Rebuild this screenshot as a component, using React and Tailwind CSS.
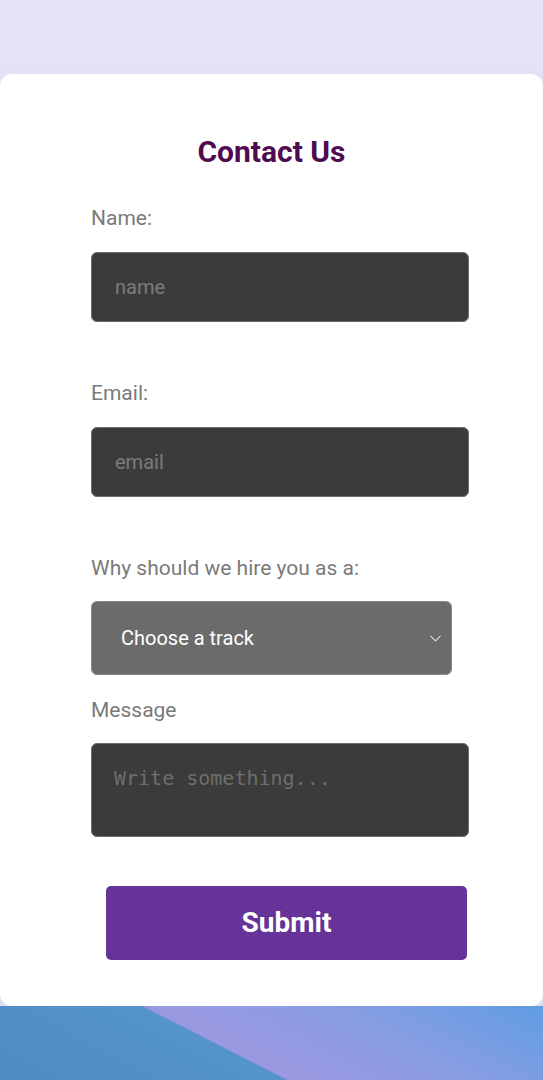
import { ChevronDown } from 'lucide-react';

const font = { fontFamily: 'Roboto, "Noto Sans", sans-serif' };

function Label({ children, className = '' }) {
  return <p className={`text-[21px] leading-[24px] text-[#7a7a7a] ${className}`}>{children}</p>;
}

export default function App() {
  return (
    <div className="min-h-screen w-[543px] bg-gradient-to-b from-[#e4e3f6] to-[#dfdcf2]" style={font}>
      <div className="h-[74px]" />
      <main className="rounded-[12px] bg-white px-[91px] pb-[46px] pt-[60px]">
        <h1 className="text-center text-[30px] font-bold leading-[36px] text-[#500b50]">Contact Us</h1>

        <Label className="mt-[36px]">Name:</Label>
        <input
          placeholder="name"
          className="mt-[22px] block h-[70px] w-[378px] rounded-[6px] border border-[#6c6c6c] bg-[#3b3b3b] px-[23px] text-[20px] text-white outline-none placeholder:text-[#7b7b7b]"
        />

        <Label className="mt-[59px]">Email:</Label>
        <input
          placeholder="email"
          className="mt-[22px] block h-[70px] w-[378px] rounded-[6px] border border-[#6c6c6c] bg-[#3b3b3b] px-[23px] text-[20px] text-white outline-none placeholder:text-[#7b7b7b]"
        />

        <Label className="mt-[59px]">Why should we hire you as a:</Label>
        <div className="mt-[21px] flex h-[74px] w-[361px] items-center justify-between rounded-[6px] border border-[#8a8a8a] bg-[#6b6b6b] pl-[29px] pr-[6px]">
          <span className="text-[20px] text-white">Choose a track</span>
          <ChevronDown size={19} strokeWidth={1.3} className="text-[#e0e0e0]" />
        </div>

        <Label className="mt-[23px]">Message</Label>
        <textarea
          placeholder="Write something..."
          className="mt-[21px] block h-[94px] w-[378px] resize-none rounded-[6px] border border-[#6c6c6c] bg-[#3b3b3b] px-[22px] pt-[22px] text-[20px] leading-[24px] text-white outline-none placeholder:text-[#6e6e6e]"
          style={{ fontFamily: '"DejaVu Sans Mono", monospace' }}
        />

        <button className="ml-[15px] mt-[49px] flex h-[74px] w-[361px] items-center justify-center rounded-[5px] bg-[#663399] text-[28px] font-bold text-white">
          Submit
        </button>
      </main>
      <div className="h-[74px] bg-[linear-gradient(27deg,#4e8cc4_0%,#5394c9_41.5%,#9b98e1_42%,#8a9de2_68%,#5f9de3_100%)]" />
    </div>
  );
}
